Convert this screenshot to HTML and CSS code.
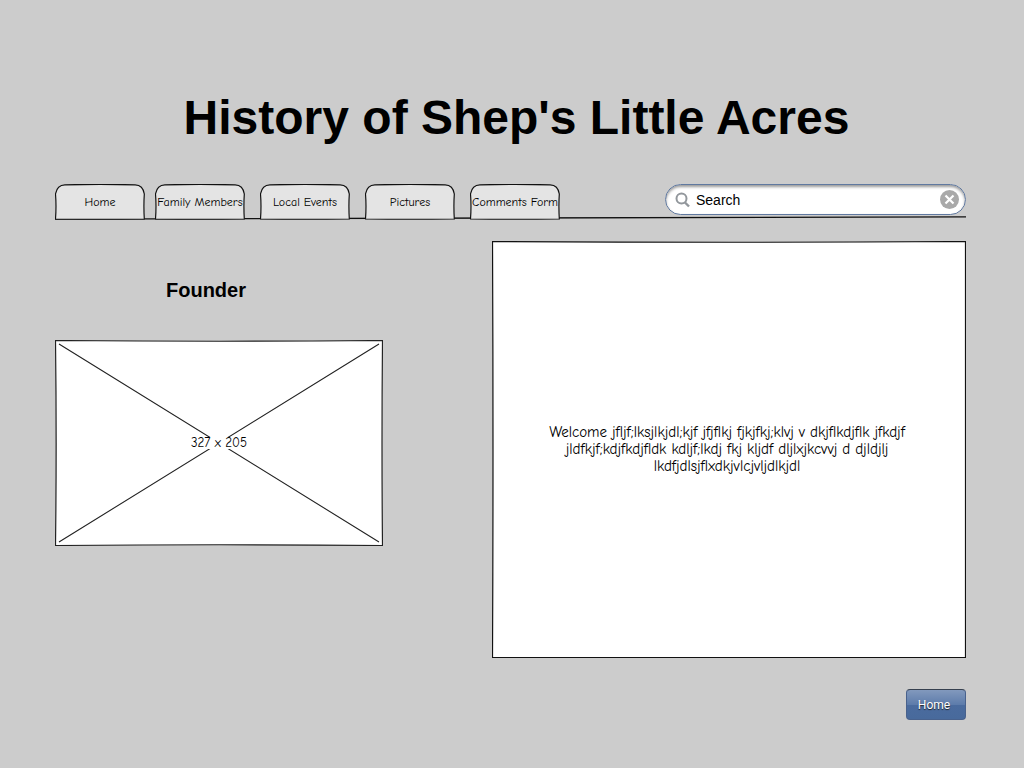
FILE: index.html
```html
<!DOCTYPE html>
<html lang="en">
<head>
<meta charset="utf-8">
<meta name="viewport" content="width=device-width, initial-scale=1">
<title>History of Shep's Little Acres</title>
<link rel="stylesheet" href="styles.css">
</head>
<body class="page">
<svg width="0" height="0" class="defs" aria-hidden="true">
  <symbol id="tab" viewBox="0 0 91 36" preserveAspectRatio="none">
    <path d="M.5 35 Q1.500 22 .5 10 Q2 1 10 .8 Q45 0 81 .8 Q89 1 90.300 10 Q89.500 22 90.300 35 Q45 35.500 .5 35Z" fill="#e4e4e4" stroke="#111" stroke-width="1.200"/>
  </symbol>
</svg>
<header class="header">
  <h1 class="title">History of Shep's Little Acres</h1>
  <div class="bar">
    <svg class="rule" viewBox="0 0 911 4" preserveAspectRatio="none" aria-hidden="true"><path d="M0 3.200 Q450 2.300 911 .8" fill="none" stroke="#111" stroke-width="1.300"/></svg>
    <nav class="tabs">
      <div class="tab-pair">
        <a class="tab" href="#"><svg class="tab-shape" aria-hidden="true"><use href="#tab"/></svg><span class="tab-label">Home</span></a>
        <a class="tab" href="#"><svg class="tab-shape" aria-hidden="true"><use href="#tab"/></svg><span class="tab-label">Family Members</span></a>
      </div>
      <a class="tab" href="#"><svg class="tab-shape" aria-hidden="true"><use href="#tab"/></svg><span class="tab-label">Local Events</span></a>
      <a class="tab" href="#"><svg class="tab-shape" aria-hidden="true"><use href="#tab"/></svg><span class="tab-label">Pictures</span></a>
      <a class="tab" href="#"><svg class="tab-shape" aria-hidden="true"><use href="#tab"/></svg><span class="tab-label">Comments Form</span></a>
    </nav>
    <form class="search">
      <svg class="search-icon" width="16" height="16" viewBox="0 0 16 16" aria-hidden="true"><circle cx="6.500" cy="6.500" r="5" fill="none" stroke="#92979c" stroke-width="2"/><path d="M10 10.500 L14 14.500" stroke="#92979c" stroke-width="2.400"/></svg>
      <input class="search-field" type="text" aria-label="Search" value="Search">
      <button class="clear" type="reset" aria-label="Clear"><svg width="19" height="19" viewBox="0 0 19 19" aria-hidden="true"><circle cx="9.500" cy="9.500" r="9.500" fill="#a9a9a9"/><path d="M5.500 5.500 L13.500 13.500 M13.500 5.500 L5.500 13.500" stroke="#fff" stroke-width="2.200"/></svg></button>
    </form>
  </div>
</header>
<main class="content">
  <section class="founder">
    <h2 class="subtitle">Founder</h2>
    <div class="photo">
      <svg class="sketch" viewBox="0 0 328 206" preserveAspectRatio="none" aria-hidden="true">
        <path d="M.5 .5 Q164 2 327.500 .5 Q326.500 103 327.500 205.500 Q164 204 .5 205.500 Q1.800 103 .5 .5Z" fill="#fff" stroke="#222" stroke-width="1.200"/>
        <path d="M4 4 L324 202 M324 4 L4 202" stroke="#222" stroke-width="1.100"/>
      </svg>
      <span class="size">327 x 205</span>
    </div>
  </section>
  <section class="welcome">
    <svg class="sketch" viewBox="0 0 474 417" preserveAspectRatio="none" aria-hidden="true">
      <path d="M.5 .5 Q237 2 473.500 .5 Q472.800 208 473.500 416.500 L.5 416.500 Q1.500 208 .5 .5Z" fill="#fff" stroke="#111" stroke-width="1.200"/>
    </svg>
    <p class="text">Welcome jfljf;lksjlkjdl;kjf jfjflkj fjkjfkj;klvj v dkjflkdjflk jfkdjf<br>jldfkjf;kdjfkdjfldk kdljf;lkdj fkj kljdf dljlxjkcvvj d djldjlj<br>lkdfjdlsjflxdkjvlcjvljdlkjdl</p>
  </section>
</main>
<footer class="footer"><button class="home" type="button">Home</button></footer>
</body>
</html>
```
FILE: styles.css
```css
* { box-sizing: border-box; }
.page {
  margin: 0;
  padding: 90px 58px 48px 55px;
  background: #ccc;
  color: #000;
  font: 13px/17px "Comic Sans MS", "Comic Neue", Lato, sans-serif;
}
.defs { position: absolute; }
.title {
  margin: 0 0 38px;
  padding-left: 12px;
  font: bold 48px/56px "Liberation Sans", Arial, sans-serif;
  text-align: center;
}
.bar {
  position: relative;
  display: flex;
  align-items: flex-start;
  justify-content: space-between;
}
.rule {
  position: absolute;
  left: 0;
  bottom: 0;
  width: 100%;
  height: 4px;
}
.tabs { display: flex; gap: 15px; }
.tab-pair { display: flex; gap: 10px; }
.tab {
  position: relative;
  display: flex;
  align-items: center;
  justify-content: center;
  width: 90px;
  height: 36px;
  color: #000;
  font-size: 12px;
  text-decoration: none;
  white-space: nowrap;
}
.tab-shape, .sketch {
  position: absolute;
  inset: 0;
  width: 100%;
  height: 100%;
}
.tab-label { position: relative; }
.search {
  position: relative;
  display: flex;
  align-items: center;
  gap: 5px;
  width: 301px;
  height: 31px;
  padding: 0 6px 0 9px;
  border: 1px solid #6079a0;
  border-radius: 16px;
  background: #fff;
  box-shadow: inset 0 2px 3px #999;
}
.search-icon { flex: none; }
.search-field {
  flex: 1;
  min-width: 0;
  padding: 0;
  border: 0;
  outline: 0;
  background: transparent;
  color: #000;
  font: 14px/20px "Liberation Sans", Arial, sans-serif;
}
.clear {
  display: flex;
  padding: 0;
  border: 0;
  background: none;
}
.content {
  display: grid;
  grid-template-columns: 328fr 474fr;
  gap: 109px;
  margin-top: 21px;
}
.subtitle {
  margin: 0;
  padding: 37px 26px 38px 0;
  font: bold 20px/24px "Liberation Sans", Arial, sans-serif;
  text-align: center;
}
.photo {
  position: relative;
  display: flex;
  align-items: center;
  justify-content: center;
  aspect-ratio: 328 / 206;
}
.size {
  position: relative;
  background: #fff;
  line-height: 12px;
}
.welcome {
  position: relative;
  display: flex;
  align-items: center;
  justify-content: center;
  min-height: 417px;
}
.text {
  position: relative;
  margin: 0;
  padding-right: 4px;
  font-size: 15px;
  text-align: center;
}
.footer {
  display: flex;
  justify-content: flex-end;
  margin-top: 31px;
}
.home {
  width: 60px;
  height: 31px;
  padding: 0 4px 0 0;
  border: 1px solid #48618c;
  border-top-color: #36404f;
  border-radius: 4px;
  background: linear-gradient(#8299bd, #5d7cab 50%, #4a6b9e 50%, #486a9c);
  color: #fff;
  font: 12px/16px Roboto, sans-serif;
  text-shadow: 0 1px 1px #222;
}
```
